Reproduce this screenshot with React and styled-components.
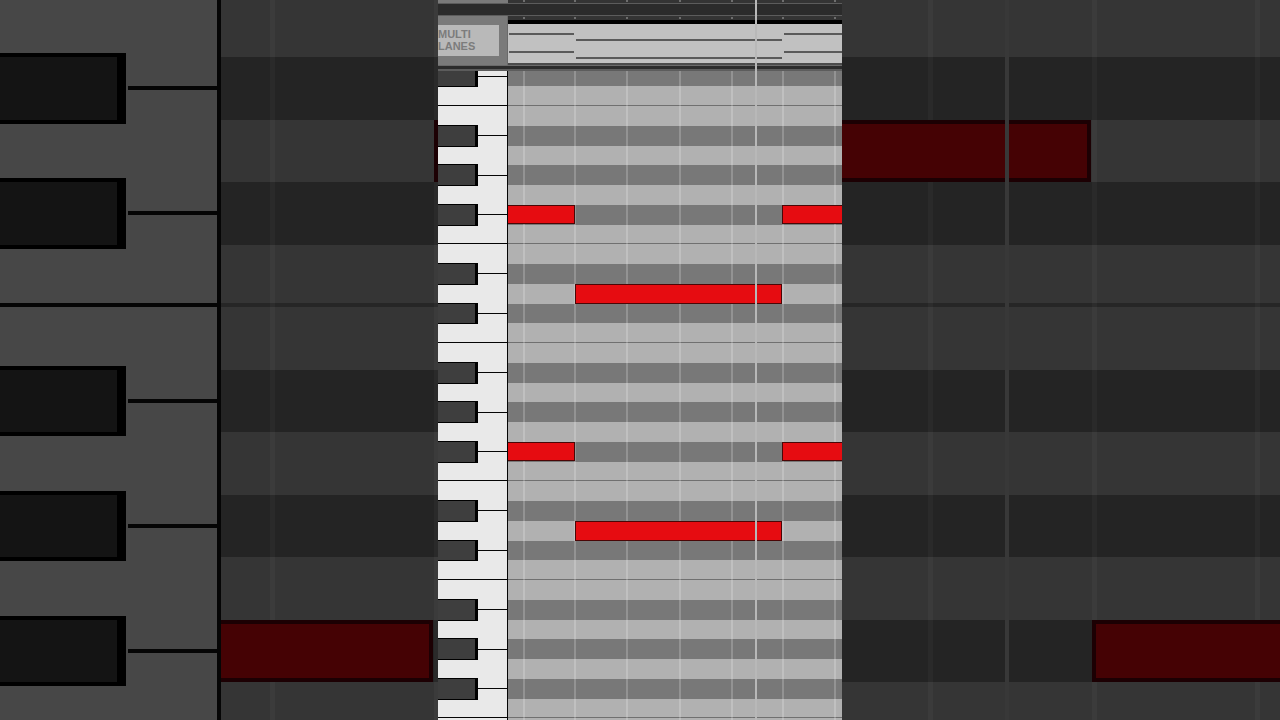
import React from "react"
import styled, { createGlobalStyle, ThemeProvider } from "styled-components"

const GlobalStyle = createGlobalStyle`
    * {
        box-sizing: border-box;
    }
    body {
        margin: 0;
        overflow: hidden;
        background-color: #343434;
        font-family: "Liberation Sans", Arial, sans-serif;
    }
`

// the same roll is drawn twice: large and dim behind, normal size in front
const dim = {
    keyWidth: 221,
    blackWidth: 126,
    blackOverlap: 4,
    blackEdge: 9,
    keyGap: 2,
    edge: 4,
    octave: 750,
    first: 307,
    gridLine: 5,
    noteEdge: 4,
    playheadWidth: 4,
    white: "#474747",
    black: "#141414",
    ink: "#050505",
    rowLight: "#353535",
    rowDark: "#242424",
    rowLine: "#262626",
    grid: "rgba(255, 255, 255, 0.03)",
    note: "#450204",
    noteBorder: "#1c0003",
    playhead: "#383838",
}

const bright = {
    keyWidth: 70,
    blackWidth: 40,
    blackOverlap: 1,
    blackEdge: 3,
    keyGap: 0,
    edge: 1,
    octave: 237,
    first: 35,
    gridLine: 2,
    noteEdge: 1,
    playheadWidth: 2,
    white: "#e9e9e9",
    black: "#3e3e3e",
    ink: "#050505",
    rowLight: "#b1b1b1",
    rowDark: "#787878",
    rowLine: "#707070",
    grid: "rgba(255, 255, 255, 0.2)",
    note: "#e60c11",
    noteBorder: "#4a0606",
    playhead: "#b8b8b8",
}

const pitches = ["B", "A#", "A", "G#", "G", "F#", "F", "E", "D#", "D", "C#", "C"]

const dimRoll = {
    octaves: [5, 4],
    lines: [49, 213, 377, 542, 707, 871, 1034],
    playhead: 784,
    notes: [
        { name: "D5", left: 213, top: 120, width: 657, height: 62 },
        { name: "F#4", left: -4, top: 620, width: 216, height: 62 },
        { name: "F#4", left: 871, top: 620, width: 660, height: 62 },
    ],
}

const ticks = [15, 66, 118, 171, 223, 274, 326]

const brightRoll = {
    octaves: [6, 5, 4, 3],
    lines: ticks,
    playhead: 247,
    notes: [
        { name: "F#5", left: -1, top: 134, width: 68, height: 19 },
        { name: "D5", left: 67, top: 213, width: 207, height: 20 },
        { name: "F#5", left: 274, top: 134, width: 207, height: 19 },
        { name: "F#4", left: -1, top: 371, width: 68, height: 19 },
        { name: "D4", left: 67, top: 450, width: 207, height: 20 },
        { name: "F#4", left: 274, top: 371, width: 207, height: 19 },
    ],
}

function PianoRoll({ octaves, lines, playhead, notes }) {
    return (
        <Roll>
            <Keys>
                {octaves.map((octave, index) => (
                    <Slice key={octave} $first={index === 0}>
                        <Octave>
                            {pitches.map(pitch => (
                                <KeyRow key={pitch} $pitch={pitch}>
                                    {pitch.includes("#") && (
                                        <>
                                            <BlackKey
                                                aria-label={pitch + octave}
                                            />
                                            <KeySplit />
                                        </>
                                    )}
                                </KeyRow>
                            ))}
                        </Octave>
                    </Slice>
                ))}
            </Keys>
            <Lanes>
                {octaves.map((octave, index) => (
                    <Slice key={octave} $first={index === 0}>
                        <Octave>
                            {pitches.map(pitch => (
                                <Lane key={pitch} $pitch={pitch} />
                            ))}
                        </Octave>
                    </Slice>
                ))}
                {lines.map(x => (
                    <GridLine key={x} $x={x} />
                ))}
                {notes.map(note => (
                    <Note key={note.name + note.left} $note={note} />
                ))}
                <Playhead $x={playhead} />
            </Lanes>
        </Roll>
    )
}

export default function App() {
    return (
        <Stage>
            <GlobalStyle />
            <ThemeProvider theme={dim}>
                <PianoRoll {...dimRoll} />
            </ThemeProvider>
            <ThemeProvider theme={bright}>
                <Panel>
                    <Strip>
                        <StripSide />
                        <StripTrack />
                    </Strip>
                    <Divider />
                    <Overview>
                        <OverviewSide>
                            <LanesButton>MULTI LANES</LanesButton>
                        </OverviewSide>
                        <OverviewTrack>
                            <OverviewRuler />
                            <Clips>
                                <Clip $width={67} $pad={9} />
                                <Clip $width={208} $pad={15} />
                                <Clip $width={208} $pad={9} />
                            </Clips>
                        </OverviewTrack>
                    </Overview>
                    <Splitter />
                    <PianoRoll {...brightRoll} />
                    {ticks.map(x => (
                        <Tick key={x} $x={x} />
                    ))}
                    <HeaderPlayhead />
                </Panel>
            </ThemeProvider>
        </Stage>
    )
}

const Stage = styled.main`
    position: relative;
    display: flex;
    height: 100vh;
    overflow: hidden;
`

const Panel = styled.section`
    position: absolute;
    top: 0;
    bottom: 0;
    left: calc(50% - 202px);
    width: 404px;
    display: flex;
    flex-direction: column;
    overflow: hidden;
`

const Roll = styled.div`
    display: flex;
    flex: 1;
    min-height: 0;
    overflow: hidden;
`

const Keys = styled.div`
    flex: 0 0 ${({ theme }) => theme.keyWidth}px;
    background-color: ${({ theme }) => theme.white};
    border-right: ${({ theme }) => theme.edge}px solid
        ${({ theme }) => theme.ink};
`

const Lanes = styled.div`
    position: relative;
    flex: 1;
    overflow: hidden;
`

// the top octave is scrolled so that only its lowest rows show
const Slice = styled.div`
    display: flex;
    align-items: flex-end;
    overflow: hidden;
    height: ${({ theme, $first }) => ($first ? theme.first : theme.octave)}px;
`

const Octave = styled.div`
    display: grid;
    grid-template-rows: repeat(12, 1fr);
    flex: 1;
    height: ${({ theme }) => theme.octave}px;
`

const isEdge = pitch => pitch === "F" || pitch === "C"

const KeyRow = styled.div`
    display: flex;
    align-items: center;
    min-height: 0;
    border-bottom: ${({ theme, $pitch }) =>
        isEdge($pitch) ? `${theme.edge}px solid ${theme.ink}` : "none"};
`

const BlackKey = styled.button`
    align-self: stretch;
    width: ${({ theme }) => theme.blackWidth}px;
    margin: -${({ theme }) => theme.blackOverlap}px 0;
    padding: 0;
    border: ${({ theme }) => theme.edge}px solid #000000;
    border-left: none;
    border-right-width: ${({ theme }) => theme.blackEdge}px;
    background-color: ${({ theme }) => theme.black};
`

const KeySplit = styled.div`
    flex: 1;
    height: ${({ theme }) => theme.edge}px;
    margin-left: ${({ theme }) => theme.keyGap}px;
    background-color: ${({ theme }) => theme.ink};
`

const Lane = styled.div`
    background-color: ${({ theme, $pitch }) =>
        $pitch.includes("#") ? theme.rowDark : theme.rowLight};
    border-bottom: ${({ theme, $pitch }) =>
        isEdge($pitch) ? `${theme.edge}px solid ${theme.rowLine}` : "none"};
`

const GridLine = styled.div`
    position: absolute;
    top: 0;
    bottom: 0;
    left: ${({ $x }) => $x}px;
    width: ${({ theme }) => theme.gridLine}px;
    background-color: ${({ theme }) => theme.grid};
`

const Note = styled.div`
    position: absolute;
    left: ${({ $note }) => $note.left}px;
    top: ${({ $note }) => $note.top}px;
    width: ${({ $note }) => $note.width}px;
    height: ${({ $note }) => $note.height}px;
    background-color: ${({ theme }) => theme.note};
    border: ${({ theme }) => theme.noteEdge}px solid
        ${({ theme }) => theme.noteBorder};
`

const Playhead = styled.div`
    position: absolute;
    top: 0;
    bottom: 0;
    left: ${({ $x }) => $x}px;
    width: ${({ theme }) => theme.playheadWidth}px;
    background-color: ${({ theme }) => theme.playhead};
`

const Strip = styled.div`
    display: flex;
    height: 3px;
`

const StripSide = styled.div`
    flex: 0 0 70px;
    background-color: #7a7a7a;
`

const StripTrack = styled.div`
    flex: 1;
    background-color: #343434;
`

const Divider = styled.div`
    height: 13px;
    background-color: #2b2b2b;
    border-top: 1px solid #5c5c5c;
    border-bottom: 1px solid #5c5c5c;
`

const Overview = styled.div`
    display: flex;
    height: 49px;
`

const OverviewSide = styled.div`
    display: flex;
    align-items: center;
    flex: 0 0 70px;
    background-color: #7a7a7a;
    border-right: 1px solid #6a6a6a;
`

const LanesButton = styled.button`
    width: 61px;
    height: 31px;
    padding: 0 0 2px;
    border: none;
    background-color: #b9b9b9;
    color: #7c7c7c;
    font-family: inherit;
    font-size: 11px;
    font-weight: 700;
    line-height: 12px;
    text-align: left;
    text-indent: 0;
`

const OverviewTrack = styled.div`
    display: flex;
    flex-direction: column;
    flex: 1;
    min-width: 0;
`

const OverviewRuler = styled.div`
    height: 8px;
    background-color: #343434;
    border-bottom: 4px solid #000000;
`

const Clips = styled.div`
    display: flex;
    flex: 1;
    overflow: hidden;
    background-color: #c1c1c1;
    border-bottom: 2px solid #4a4a4a;
`

const Clip = styled.div`
    flex: 0 0 ${({ $width }) => $width}px;
    padding: ${({ $pad }) => $pad}px 1px 0;
    &::before {
        content: "";
        display: block;
        height: 16px;
        border-top: 2px solid #5a5a5a;
        border-bottom: 2px solid #5a5a5a;
    }
`

const Splitter = styled.div`
    height: 6px;
    background-color: #2b2b2b;
    border-top: 1px solid #6a6a6a;
    border-bottom: 2px solid #5c5c5c;
`

const Tick = styled.div`
    position: absolute;
    top: 0;
    left: ${({ $x }) => $x + 70}px;
    width: 2px;
    height: 19px;
    border-top: 2px solid #6e6e6e;
    border-bottom: 2px solid #6e6e6e;
`

const HeaderPlayhead = styled.div`
    position: absolute;
    top: 0;
    left: 317px;
    width: 2px;
    height: 71px;
    background-color: #b8b8b8;
`
